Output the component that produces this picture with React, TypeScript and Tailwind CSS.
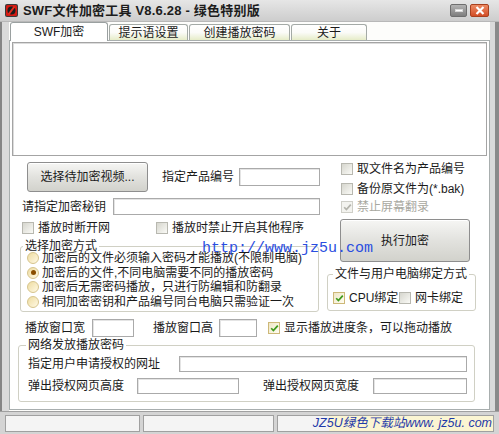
import type { ReactNode } from 'react';

// ============================================================================
// SMALL CONTROLS
// ============================================================================

function CheckBox({ checked = false, disabled = false }: { checked?: boolean; disabled?: boolean }) {
  const tone = disabled
    ? 'border-[#cfcfc8] bg-[#f3f3ef]'
    : checked
      ? 'border-[#cdb878] bg-linear-to-br from-[#efe6c4] to-[#fffdf2]'
      : 'border-[#b8b8b0] bg-linear-to-br from-[#d6d6ce] to-[#fafaf6]';
  return (
    <span className={`w-[12px] h-[12px] border shrink-0 flex items-center justify-center ${tone}`}>
      {checked && (
        <svg width="9" height="9" viewBox="0 0 9 9">
          <path
            d="M1.2 4.2 L3.4 6.6 L7.8 1.6"
            stroke={disabled ? '#b4b4ac' : '#3f9a1c'}
            strokeWidth="1.7"
            fill="none"
          />
        </svg>
      )}
    </span>
  );
}

function Check({
  label,
  checked,
  disabled,
  className = '',
}: {
  label: string;
  checked?: boolean;
  disabled?: boolean;
  className?: string;
}) {
  return (
    <div className={`flex items-center h-[14px] shrink-0 ${className}`}>
      <CheckBox checked={checked} disabled={disabled} />
      <span
        className={`ml-[4px] leading-none whitespace-nowrap ${disabled ? 'text-[#a8a8a0]' : 'text-[#1a1a1a]'}`}
      >
        {label}
      </span>
    </div>
  );
}

function Radio({ label, on }: { label: string; on?: boolean }) {
  return (
    <div className="flex items-center h-[14.5px]">
      <span className="w-[12px] h-[12px] rounded-full border border-[#d6c48c] bg-linear-to-br from-[#eedca0] to-[#fff9e4] shrink-0 flex items-center justify-center">
        {on && <span className="w-[5px] h-[5px] rounded-full bg-[#8a4e00]" />}
      </span>
      <span className="ml-[3px] leading-none whitespace-nowrap">{label}</span>
    </div>
  );
}

function Field({ className = '' }: { className?: string }) {
  return (
    <div className={`shrink-0 border border-[#aaaaaa] bg-white shadow-[inset_1px_1px_0_#e4e4e4] ${className}`} />
  );
}

function Label({ children, className = '' }: { children: ReactNode; className?: string }) {
  return <span className={`shrink-0 leading-none whitespace-nowrap ${className}`}>{children}</span>;
}

// group box: the caption sits on the top border line
function Group({
  title,
  titlePad,
  className = '',
  children,
}: {
  title: string;
  titlePad: string;
  className?: string;
  children: ReactNode;
}) {
  return (
    <div className={`shrink-0 border border-[#d0d0c4] rounded-[3px] ${className}`}>
      <div className={`-mt-[7px] h-[12px] flex ${titlePad}`}>
        <span className="px-[2px] bg-white text-[12px] leading-[12px] whitespace-nowrap">{title}</span>
      </div>
      {children}
    </div>
  );
}

function XpButton({ children, className = '' }: { children: ReactNode; className?: string }) {
  return (
    <div
      className={`shrink-0 rounded-[3px] border border-[#8e8e8e] bg-linear-to-b from-[#f6f6f4] via-[#e2e2de] to-[#d2d2cc] shadow-[inset_0_1px_0_#ffffff] flex items-center justify-center ${className}`}
    >
      {children}
    </div>
  );
}

// ============================================================================
// TITLE BAR
// ============================================================================

function TitleBar() {
  return (
    <div className="h-[22px] shrink-0 flex items-center bg-linear-to-b from-[#e6e6e6] to-[#cdcdcd] border-b border-[#b8b8b8]">
      <svg className="ml-[5px]" width="13" height="13" viewBox="0 0 13 13">
        <rect x="0" y="0" width="13" height="13" rx="2" fill="#3a3a3a" />
        <rect x="1" y="1" width="11" height="11" rx="1.5" fill="#d41a12" />
        <circle cx="6.5" cy="6.5" r="4" fill="#1c1c1c" />
        <path d="M9.5 2.5 L3.5 10.5" stroke="#e52a1c" strokeWidth="2" />
      </svg>
      <span className="ml-[5px] text-[13px] font-bold text-[#1c1c1c] leading-none tracking-[0.2px]">
        SWF文件加密工具 V8.6.28 - 绿色特别版
      </span>
      <div className="ml-auto mr-[10px] flex items-center gap-[3px]">
        <div className="w-[17px] h-[13px] rounded-[2px] border border-[#6e6e6e] bg-linear-to-b from-[#b4b4b4] to-[#7e7e7e] flex items-center justify-center">
          <span className="w-[8px] h-[3px] bg-white border border-[#d8d8d8]" />
        </div>
        <div className="w-[19px] h-[13px] rounded-[2px] border border-[#a8401e] bg-linear-to-b from-[#ec8a62] to-[#d24c24] flex items-center justify-center">
          <svg width="10" height="9" viewBox="0 0 10 9">
            <path d="M1.5 1 L8.5 8 M8.5 1 L1.5 8" stroke="#ffffff" strokeWidth="2.2" />
          </svg>
        </div>
      </div>
    </div>
  );
}

// ============================================================================
// TABS
// ============================================================================

const TABS = [
  { label: 'SWF加密', w: 'w-[98px]', active: true },
  { label: '提示语设置', w: 'w-[79px]' },
  { label: '创建播放密码', w: 'w-[101px]' },
  { label: '关于', w: 'w-[76px]' },
];

function Tabs() {
  return (
    <div className="h-[18px] flex items-end pl-[1px] gap-[1px]">
      {TABS.map((t) =>
        t.active ? (
          <div
            key={t.label}
            className={`${t.w} h-[19px] -mb-[1px] z-10 rounded-t-[3px] border border-b-0 border-[#9aa0a0] bg-white flex items-center justify-center leading-none`}
          >
            {t.label}
          </div>
        ) : (
          <div
            key={t.label}
            className={`${t.w} h-[16px] rounded-t-[3px] border border-b-0 border-[#a4aaa6] bg-linear-to-b from-[#ffffff] via-[#fbfbf8] to-[#e6ecc8] flex items-center justify-center leading-none`}
          >
            {t.label}
          </div>
        ),
      )}
    </div>
  );
}

// ============================================================================
// APP
// ============================================================================

export default function App() {
  return (
    <div className="w-[499px] h-[434px] overflow-hidden flex flex-col bg-[#d6d6d6] text-[12px] text-[#1a1a1a] font-['Liberation_Sans','Noto_Sans_CJK_SC',sans-serif] relative">
      <TitleBar />

      <div className="flex-1 flex min-h-0">
        {/* left frame */}
        <div className="w-[2px] bg-[#858585]" />
        <div className="w-[7px] bg-[#dadada]" />

        {/* client */}
        <div className="w-[481px] bg-[#fdfdfb] flex flex-col">
          <Tabs />

          {/* tab page */}
          <div className="h-[370px] border border-[#a8aeae] bg-white px-[2px] pt-[1px] flex flex-col">
            {/* memo */}
            <div className="h-[114px] border border-[#a4a4a4] shadow-[inset_1px_1px_0_#dcdcdc] bg-white shrink-0" />

            {/* upper section */}
            <div className="flex shrink-0 h-[156px]">
              {/* left column */}
              <div className="w-[315px] shrink-0 flex flex-col">
                <div className="mt-[6px] h-[30px] flex items-center">
                  <XpButton className="ml-[15px] w-[121px] h-[30px]">选择待加密视频...</XpButton>
                  <Label className="ml-[14px] w-[77px]">指定产品编号</Label>
                  <Field className="w-[81px] h-[18px]" />
                </div>
                <div className="mt-[6px] h-[17px] flex items-center">
                  <Label className="ml-[10px] w-[91px]">请指定加密秘钥</Label>
                  <Field className="w-[207px] h-[17px]" />
                </div>
                <div className="mt-[6px] flex items-center">
                  <Check label="播放时断开网" className="ml-[10px] w-[134px]" />
                  <Check label="播放时禁止开启其他程序" />
                </div>
                <Group title="选择加密方式" titlePad="pl-[2px]" className="mt-[11px] ml-[8px] w-[299px] h-[66px]">
                  <div className="-mt-[1px] pl-[6px]">
                    <Radio label="加密后的文件必须输入密码才能播放(不限制电脑)" />
                    <Radio label="加密后的文件,不同电脑需要不同的播放密码" on />
                    <Radio label="加密后无需密码播放，只进行防编辑和防翻录" />
                    <Radio label="相同加密密钥和产品编号同台电脑只需验证一次" />
                  </div>
                </Group>
              </div>

              {/* right column */}
              <div className="flex-1 flex flex-col">
                <Check label="取文件名为产品编号" className="mt-[6px] ml-[14px]" />
                <Check label="备份原文件为(*.bak)" className="mt-[6px] ml-[14px]" />
                <Check label="禁止屏幕翻录" checked disabled className="mt-[4px] ml-[14px]" />
                <XpButton className="mt-[5px] ml-[13px] w-[130px] h-[43px]">执行加密</XpButton>
                <Group title="文件与用户电脑绑定方式" titlePad="pl-[5px]" className="mt-[12px] w-[149px] h-[37px]">
                  <div className="mt-[11px] pl-[5px] flex items-center">
                    <Check label="CPU绑定" checked className="w-[66px]" />
                    <Check label="网卡绑定" />
                  </div>
                </Group>
              </div>
            </div>

            {/* player size row */}
            <div className="mt-[7px] h-[18px] flex items-center shrink-0">
              <Label className="ml-[13px] w-[67px]">播放窗口宽</Label>
              <Field className="w-[42px] h-[18px]" />
              <Label className="ml-[19px] w-[66px]">播放窗口高</Label>
              <Field className="w-[38px] h-[18px]" />
              <Check label="显示播放进度条，可以拖动播放" checked className="ml-[11px]" />
            </div>

            {/* network group */}
            <Group title="网络发放播放密码" titlePad="pl-[7px]" className="mt-[8px] ml-[6px] w-[457px] h-[57px]">
              <div className="mt-[5px] pl-[9px] h-[16px] flex items-center">
                <Label className="w-[151px]">指定用户申请授权的网址</Label>
                <Field className="w-[288px] h-[16px]" />
              </div>
              <div className="mt-[6px] pl-[9px] h-[16px] flex items-center">
                <Label className="w-[109px]">弹出授权网页高度</Label>
                <Field className="w-[102px] h-[16px]" />
                <Label className="ml-[24px] w-[110px]">弹出授权网页宽度</Label>
                <Field className="w-[94px] h-[16px]" />
              </div>
            </Group>
          </div>
        </div>

        {/* right frame */}
        <div className="w-[5px] bg-[#dadada]" />
        <div className="w-[4px] bg-[#8a8a8a]" />
      </div>

      {/* status bar */}
      <div className="h-[23px] shrink-0 flex items-center gap-[3px] px-[5px] bg-[#d4d4d4] border-t border-[#a0a0a0]">
        <div className="w-[135px] h-[17px] border border-[#a0a0a0] bg-[#f4f4f4]" />
        <div className="w-[131px] h-[17px] border border-[#a0a0a0] bg-[#f4f4f4]" />
        <div className="flex-1 h-[17px] border border-[#a0a0a0] bg-[#f4f4f4] flex justify-end">
          <div className="w-[164px] h-full bg-[#fbf5d2] flex items-center justify-end pr-[1px]">
            <span className="italic text-[12.5px] text-[#1f3aa8] leading-none whitespace-nowrap">
              JZ5U绿色下载站www. jz5u. com
            </span>
          </div>
        </div>
      </div>

      {/* watermark over the form */}
      <span className="absolute left-[202px] top-[241px] text-[15px] leading-none text-[#2a4ee0] font-['Liberation_Mono',monospace] pointer-events-none">
        http://www.jz5u.com
      </span>
    </div>
  );
}
